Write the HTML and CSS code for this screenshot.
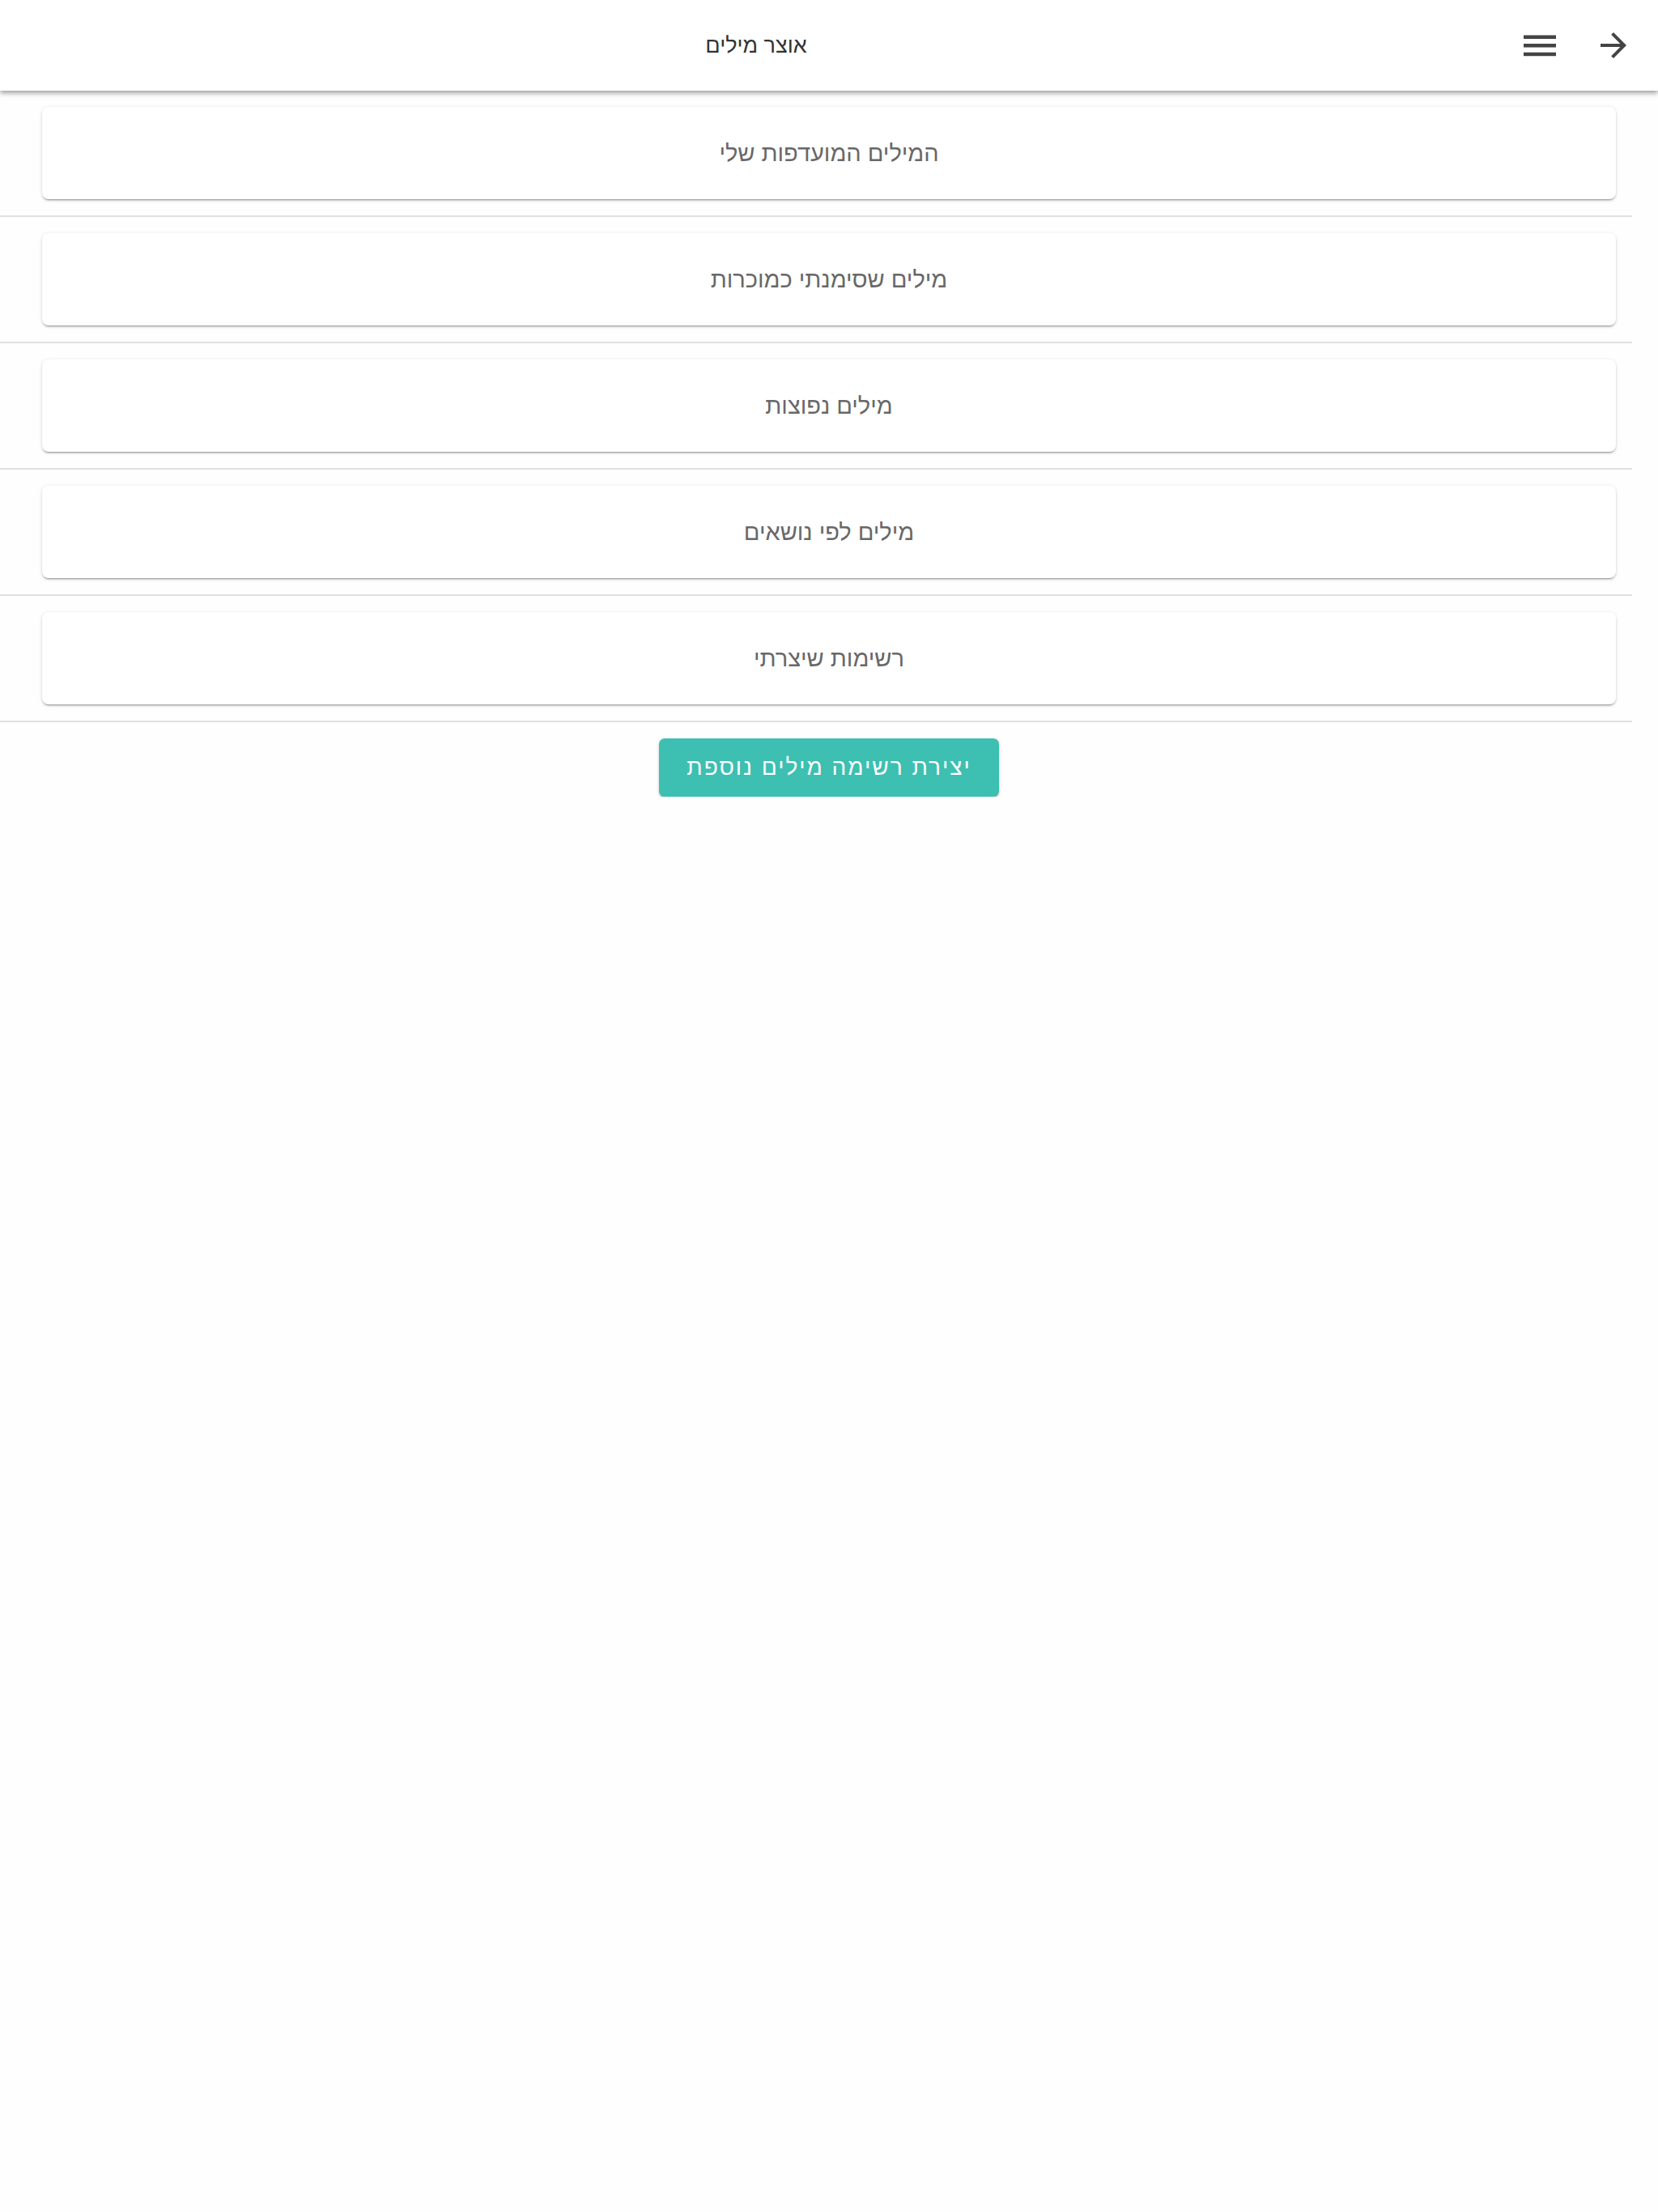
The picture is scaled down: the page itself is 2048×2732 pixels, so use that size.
FILE: index.html
```html
<!DOCTYPE html>
<html lang="he" dir="rtl">
<head>
<meta charset="utf-8">
<title>אוצר מילים</title>
<link rel="stylesheet" href="styles.css">
</head>
<body>
<header class="toolbar">
  <button class="icon-btn arrow-btn" aria-label="חזרה">
    <svg width="48" height="48" viewBox="0 0 24 24"><path d="M12 4l-1.41 1.41L16.17 11H4v2h12.17l-5.58 5.59L12 20l8-8z" fill="#444"/></svg>
  </button>
  <button class="icon-btn menu-btn" aria-label="תפריט">
    <svg width="40" height="27" viewBox="0 0 40 27"><rect x="0" y="0.5" width="40" height="4.5" fill="#444"/><rect x="0" y="11" width="40" height="4.5" fill="#444"/><rect x="0" y="21.7" width="40" height="4.5" fill="#444"/></svg>
  </button>
  <div class="title">אוצר מילים</div>
</header>
<main class="content">
  <ul class="list">
    <li class="row"><div class="card">המילים המועדפות שלי</div></li>
    <li class="row"><div class="card">מילים שסימנתי כמוכרות</div></li>
    <li class="row"><div class="card">מילים נפוצות</div></li>
    <li class="row"><div class="card">מילים לפי נושאים</div></li>
    <li class="row"><div class="card">רשימות שיצרתי</div></li>
  </ul>
  <div class="actions">
    <button class="add-btn">יצירת רשימה מילים נוספת</button>
  </div>
</main>
</body>
</html>
```

FILE: styles.css
```css
html, body {
  margin: 0;
  padding: 0;
  background: #fefefe;
  font-family: "Liberation Sans", "DejaVu Sans", sans-serif;
}

.toolbar {
  position: relative;
  z-index: 2;
  height: 112px;
  display: flex;
  flex-direction: row;
  align-items: center;
  background: #ffffff;
  box-shadow: 0 3px 6px rgba(0, 0, 0, 0.38);
  padding-right: 31px;
  box-sizing: border-box;
}

.icon-btn {
  width: 48px;
  height: 48px;
  padding: 0;
  border: 0;
  background: transparent;
  display: flex;
  align-items: center;
  justify-content: center;
}

.menu-btn {
  margin-right: 43px;
}

.title {
  flex: 1;
  text-align: center;
  font-size: 27px;
  color: #333333;
  padding-right: 10px;
}

.content {
  display: block;
}

.list {
  list-style: none;
  margin: 0 32px 0 0;
  padding: 0;
  width: 2016px;
}

.row {
  padding: 20px 20px 20px 52px;
  border-bottom: 2px solid #e0e0e0;
}

.card {
  height: 114px;
  background: #ffffff;
  border-radius: 8px;
  box-shadow: 0 3px 1px -2px rgba(0,0,0,0.2), 0 2px 2px 0 rgba(0,0,0,0.14), 0 1px 5px 0 rgba(0,0,0,0.12);
  display: flex;
  align-items: center;
  justify-content: center;
  font-size: 29px;
  color: #686868;
}

.actions {
  display: flex;
  justify-content: center;
  padding-top: 20px;
}

.add-btn {
  width: 420px;
  height: 72px;
  border: 0;
  border-radius: 7px;
  background: #3dbfb1;
  color: #ffffff;
  font-family: "Liberation Sans", "DejaVu Sans", sans-serif;
  font-size: 28px;
  letter-spacing: 2px;
  box-shadow: 0 3px 1px -2px rgba(0,0,0,0.2), 0 2px 2px 0 rgba(0,0,0,0.14), 0 1px 5px 0 rgba(0,0,0,0.12);
}
```
